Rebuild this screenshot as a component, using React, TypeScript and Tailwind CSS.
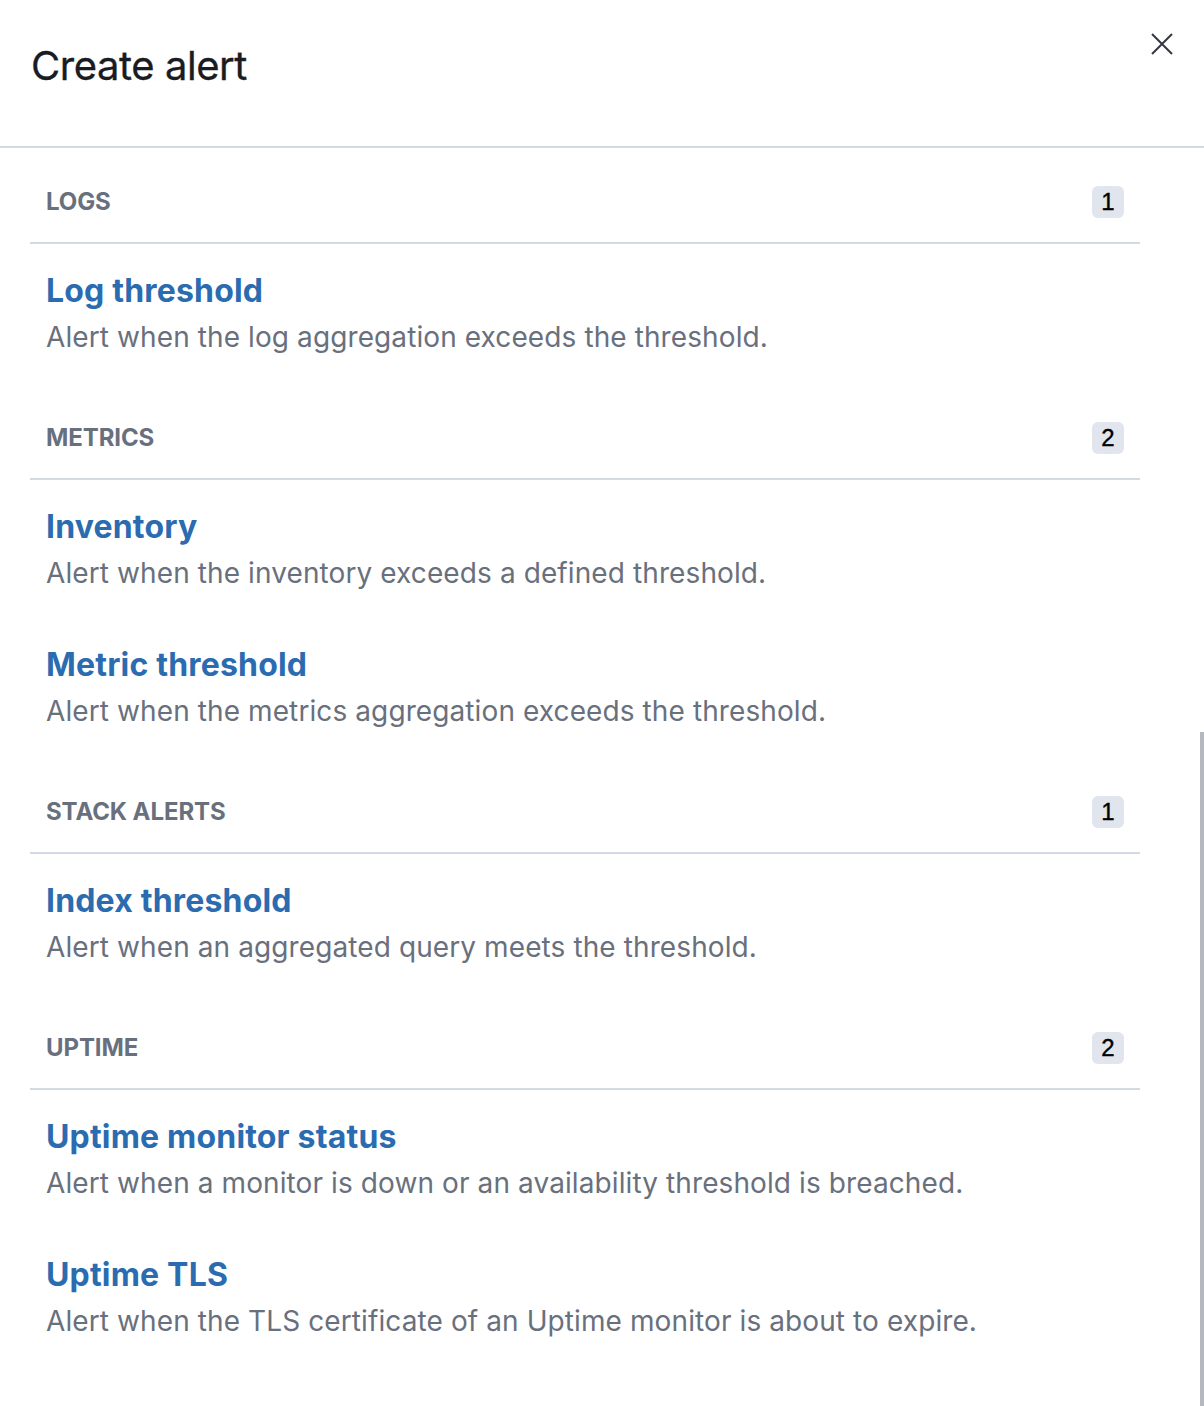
import React from 'react';

type AlertType = { title: string; description: string };
type Group = { name: string; items: AlertType[] };

const groups: Group[] = [
  {
    name: 'LOGS',
    items: [{ title: 'Log threshold', description: 'Alert when the log aggregation exceeds the threshold.' }],
  },
  {
    name: 'METRICS',
    items: [
      { title: 'Inventory', description: 'Alert when the inventory exceeds a defined threshold.' },
      { title: 'Metric threshold', description: 'Alert when the metrics aggregation exceeds the threshold.' },
    ],
  },
  {
    name: 'STACK ALERTS',
    items: [{ title: 'Index threshold', description: 'Alert when an aggregated query meets the threshold.' }],
  },
  {
    name: 'UPTIME',
    items: [
      { title: 'Uptime monitor status', description: 'Alert when a monitor is down or an availability threshold is breached.' },
      { title: 'Uptime TLS', description: 'Alert when the TLS certificate of an Uptime monitor is about to expire.' },
    ],
  },
];

const CloseIcon = () => (
  <svg width="22" height="22" viewBox="0 0 22 22" fill="none" stroke="#343741" strokeWidth="2">
    <path d="M1 1 L21 21 M21 1 L1 21" />
  </svg>
);

const App = () => {
  return (
    <div className="relative min-h-[1406px] w-full bg-white font-['Inter',sans-serif] overflow-hidden">
      {/* header */}
      <div className="h-[148px] border-b-2 border-[#d3dae6] flex items-start justify-between pl-[31px] pr-[31px]">
        <h1 className="mt-[42px] text-[40px] leading-[48px] text-[#1a1c21] font-normal tracking-[-0.45px] [-webkit-text-stroke:0.3px_#1a1c21]">
          Create alert
        </h1>
        <button className="mt-[33px] w-[22px] h-[22px] flex items-center justify-center">
          <CloseIcon />
        </button>
      </div>

      {/* list */}
      <div className="pl-[30px] pr-[64px]">
        {groups.map((g, i) => (
          <div key={g.name} className={i === 0 ? 'pt-[38px]' : 'pt-[39px]'}>
            <div className="flex items-center justify-between px-4 pb-[24px] border-b-2 border-[#d3dae6]">
              <span className="text-[24px] leading-[32px] font-bold text-[#69707d] tracking-[-0.1px]">{g.name}</span>
              <span className="w-8 h-8 rounded-[6px] bg-[#e0e5ee] flex items-center justify-center text-[24px] leading-[32px] text-[#000] font-['Liberation_Sans',sans-serif] [-webkit-text-stroke:0.4px_#000]">
                {g.items.length}
              </span>
            </div>
            {g.items.map((it, j) => (
              <div key={it.title} className={j === 0 ? 'px-4 pt-[27px] pb-[26px]' : 'px-4 py-[26px]'}>
                <div className="text-[32px] leading-[40px] font-bold text-[#2b6cb0] tracking-[0.18px]">{it.title}</div>
                <div className="mt-[6px] text-[28px] leading-[40px] text-[#69707d] tracking-[0.1px]">{it.description}</div>
              </div>
            ))}
          </div>
        ))}
      </div>

      {/* scroll thumb */}
      <div className="absolute right-0 top-[732px] bottom-0 w-[4px] bg-[#b5b8bf]" />
    </div>
  );
};

export default App;
